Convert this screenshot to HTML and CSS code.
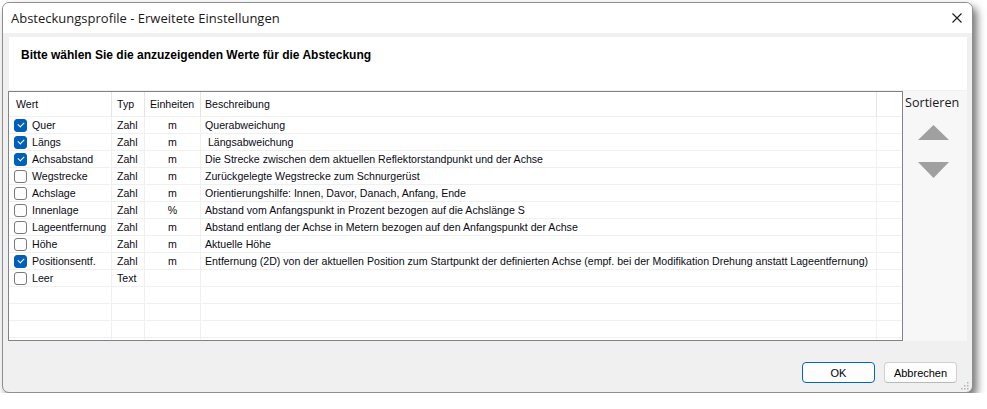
FILE: index.html
```html
<!DOCTYPE html>
<html lang="de">

<head>
    <meta charset="UTF-8">
    <title>Absteckungsprofile - Erweitete Einstellungen</title>
    <link rel="stylesheet" href="styles.css">
</head>

<body>
    <div class="window">
        <!-- Title bar -->
        <div class="titlebar">
            <span class="title">Absteckungsprofile - Erweitete Einstellungen</span>
            <span class="close">
                <svg width="10" height="10" viewBox="0 0 10 10"><path d="M0.5 0.5 L9.5 9.5 M9.5 0.5 L0.5 9.5" stroke="#1b1b1b" stroke-width="1.1" fill="none"/></svg>
            </span>
        </div>

        <!-- Intro -->
        <div class="intro">
            <p>Bitte wählen Sie die anzuzeigenden Werte für die Absteckung</p>
        </div>

        <!-- List + sort -->
        <div class="main">
            <div class="list">
                <table>
                    <thead>
                        <tr>
                            <th class="c-wert">Wert</th>
                            <th class="c-typ">Typ</th>
                            <th class="c-einh">Einheiten</th>
                            <th class="c-beschr">Beschreibung</th>
                            <th class="c-fill"></th>
                        </tr>
                    </thead>
                    <tbody>
                        <tr><td><div class="wert"><span class="cb on"></span>Quer</div></td><td>Zahl</td><td class="mid">m</td><td>Querabweichung</td><td></td></tr>
                        <tr><td><div class="wert"><span class="cb on"></span>Längs</div></td><td>Zahl</td><td class="mid">m</td><td>&nbsp;Längsabweichung</td><td></td></tr>
                        <tr><td><div class="wert"><span class="cb on"></span>Achsabstand</div></td><td>Zahl</td><td class="mid">m</td><td>Die Strecke zwischen dem aktuellen Reflektorstandpunkt und der Achse</td><td></td></tr>
                        <tr><td><div class="wert"><span class="cb"></span>Wegstrecke</div></td><td>Zahl</td><td class="mid">m</td><td>Zurückgelegte Wegstrecke zum Schnurgerüst</td><td></td></tr>
                        <tr><td><div class="wert"><span class="cb"></span>Achslage</div></td><td>Zahl</td><td class="mid">m</td><td>Orientierungshilfe: Innen, Davor, Danach, Anfang, Ende</td><td></td></tr>
                        <tr><td><div class="wert"><span class="cb"></span>Innenlage</div></td><td>Zahl</td><td class="mid">%</td><td>Abstand vom Anfangspunkt in Prozent bezogen auf die Achslänge S</td><td></td></tr>
                        <tr><td><div class="wert"><span class="cb"></span>Lageentfernung</div></td><td>Zahl</td><td class="mid">m</td><td>Abstand entlang der Achse in Metern bezogen auf den Anfangspunkt der Achse</td><td></td></tr>
                        <tr><td><div class="wert"><span class="cb"></span>Höhe</div></td><td>Zahl</td><td class="mid">m</td><td>Aktuelle Höhe</td><td></td></tr>
                        <tr><td><div class="wert"><span class="cb on"></span>Positionsentf.</div></td><td>Zahl</td><td class="mid">m</td><td>Entfernung (2D) von der aktuellen Position zum Startpunkt der definierten Achse (empf. bei der Modifikation Drehung anstatt Lageentfernung)</td><td></td></tr>
                        <tr><td><div class="wert"><span class="cb"></span>Leer</div></td><td>Text</td><td class="mid"></td><td></td><td></td></tr>
                        <tr><td></td><td></td><td></td><td></td><td></td></tr>
                        <tr><td></td><td></td><td></td><td></td><td></td></tr>
                        <tr><td></td><td></td><td></td><td></td><td></td></tr>
                        <tr><td></td><td></td><td></td><td></td><td></td></tr>
                    </tbody>
                </table>
            </div>

            <div class="sort">
                <span class="sort-label">Sortieren</span>
                <span class="arrow up">
                    <svg width="31" height="15" viewBox="0 0 31 15"><polygon points="15.5,0 31,15 0,15" fill="#a0a0a0"/></svg>
                </span>
                <span class="arrow down">
                    <svg width="31" height="16" viewBox="0 0 31 16"><polygon points="0,0 31,0 15.5,16" fill="#a0a0a0"/></svg>
                </span>
            </div>
        </div>

        <!-- Buttons -->
        <div class="footer">
            <button class="btn default">OK</button>
            <button class="btn">Abbrechen</button>
        </div>

        <span class="grip">
            <svg width="8" height="8" viewBox="0 0 8 8" fill="#b5b5b5">
                <rect x="6" y="0" width="1.5" height="1.5"/>
                <rect x="3" y="3" width="1.5" height="1.5"/><rect x="6" y="3" width="1.5" height="1.5"/>
                <rect x="0" y="6" width="1.5" height="1.5"/><rect x="3" y="6" width="1.5" height="1.5"/><rect x="6" y="6" width="1.5" height="1.5"/>
            </svg>
        </span>
    </div>
</body>

</html>
```

FILE: styles.css
```css
/* General */
body {
    margin: 0;
    padding: 0;
    background-color: #ffffff;
    font-family: "Liberation Sans", Arial, sans-serif;
    font-size: 11px;
    color: #000000;
}

.window {
    position: relative;
    box-sizing: border-box;
    width: 971px;
    height: 391px;
    margin: 2px 0 0 2px;
    background-color: #f0f0f0;
    border: 1px solid #8f8f8f;
    border-radius: 7px;
    box-shadow: 4px 5px 8px rgba(0, 0, 0, 0.55);
    overflow: hidden;
}

/* Title bar */
.titlebar {
    height: 30px;
    background-color: #ffffff;
    display: flex;
    align-items: center;
    justify-content: space-between;
    padding: 0 10px 0 8px;
}

.title {
    font-family: "Open Sans", "Noto Sans", sans-serif;
    font-size: 13px;
    color: #1a1a1a;
    margin-top: -1px;
}

.close {
    display: flex;
    margin-top: -1px;
}

/* Intro panel */
.intro {
    height: 53px;
    width: 958px;
    margin: 4px 0 0 6px;
    background-color: #ffffff;
    box-sizing: border-box;
    padding: 11px 0 0 12px;
}

.intro p {
    margin: 0;
    font-size: 12px;
    font-weight: bold;
}

/* List */
.main {
    display: flex;
    margin: 1px 0 0 5px;
}

.list {
    box-sizing: border-box;
    width: 895px;
    height: 250px;
    border: 1px solid #82828c;
    background-color: #ffffff;
    overflow: hidden;
}

table {
    table-layout: fixed;
    border-collapse: separate;
    border-spacing: 0;
    width: 893px;
    font-size: 10.6px;
    color: #0a0a14;
}

th, td {
    box-sizing: border-box;
    padding: 0 0 0 5px;
    text-align: left;
    white-space: nowrap;
    overflow: hidden;
    font-weight: normal;
    border-right: 1px solid #f0f0f0;
    border-bottom: 1px solid #f0f0f0;
}

th {
    height: 25px;
    line-height: 24px;
    border-right-color: #e5e5e5;
}

td {
    height: 17px;
    line-height: 16px;
}

th.c-wert { width: 103px; padding-left: 7px; }
th.c-typ { width: 33px; }
th.c-einh { width: 56px; }
th.c-beschr { width: 676px; padding-left: 4px; }
th.c-fill { width: 25px; border-right: none; }

td:last-child { border-right: none; }
td:nth-child(4) { padding-left: 4px; }

td.mid {
    text-align: center;
    padding-left: 0;
}

.wert {
    display: flex;
    align-items: center;
    height: 16px;
}

/* Checkbox */
.cb {
    box-sizing: border-box;
    width: 13px;
    height: 13px;
    margin-right: 5px;
    border: 1px solid #7a7a7a;
    border-radius: 3px;
    background-color: #fdfdfd;
    position: relative;
    flex-shrink: 0;
}

.cb.on {
    border-color: #005fb8;
    background-color: #005fb8;
}

.cb.on::after {
    content: "";
    position: absolute;
    left: 3px;
    top: 2px;
    width: 5px;
    height: 3px;
    border-left: 1px solid #ffffff;
    border-bottom: 1px solid #ffffff;
    transform: rotate(-45deg);
}

/* Sort panel */
.sort {
    width: 64px;
    height: 250px;
    background-color: #f7f7f7;
    display: flex;
    flex-direction: column;
}

.sort-label {
    font-family: "Open Sans", "Noto Sans", sans-serif;
    font-size: 12.6px;
    color: #1a1a1a;
    padding: 3px 0 0 2px;
}

.arrow {
    display: flex;
    margin-left: 15px;
}

.arrow.up { margin-top: 14px; }
.arrow.down { margin-top: 22px; }

/* Footer buttons */
.footer {
    display: flex;
    justify-content: flex-end;
    gap: 9px;
    padding: 21px 15px 0 0;
}

.btn {
    box-sizing: border-box;
    width: 73px;
    height: 21px;
    padding: 0;
    background-color: #fdfdfd;
    border: 1px solid #d0d0d0;
    border-bottom-color: #b8b8b8;
    border-radius: 4px;
    font-family: "Liberation Sans", Arial, sans-serif;
    font-size: 11px;
    color: #000000;
}

.btn.default {
    border: 1px solid #0067c0;
}

.grip {
    position: absolute;
    right: 3px;
    bottom: 2px;
    display: flex;
}
```
